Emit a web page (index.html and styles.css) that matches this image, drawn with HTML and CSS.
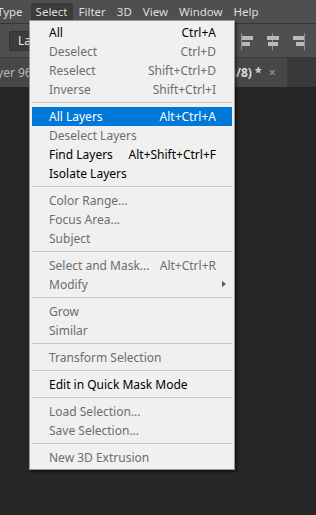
FILE: index.html
```
<!DOCTYPE html>
<html lang="en">
<head>
  <meta charset="UTF-8" />
  <meta name="viewport" content="width=device-width, initial-scale=1.0"/>
  <title>Select menu</title>
  <link rel="stylesheet" href="styles.css">
</head>
<body>

  <nav class="menubar">
    <span class="menubar-item first">Type</span>
    <span class="menubar-item open">Select</span>
    <span class="menubar-item">Filter</span>
    <span class="menubar-item">3D</span>
    <span class="menubar-item">View</span>
    <span class="menubar-item">Window</span>
    <span class="menubar-item">Help</span>
  </nav>

  <div class="options-bar">
    <div class="layer-select">Layer</div>
    <div class="align-icons">
      <svg width="14" height="17" viewBox="0 0 14 17">
        <rect x="0" y="0" width="1" height="17" fill="#8f8f8f"/>
        <rect x="1" y="3" width="11" height="4" fill="#b9b9b9"/>
        <rect x="1" y="9" width="8" height="4" fill="#b9b9b9"/>
      </svg>
      <svg width="14" height="17" viewBox="0 0 14 17">
        <rect x="6" y="0" width="1" height="17" fill="#8f8f8f"/>
        <rect x="1" y="3" width="12" height="4" fill="#b9b9b9"/>
        <rect x="2" y="9" width="10" height="4" fill="#b9b9b9"/>
      </svg>
      <svg width="14" height="17" viewBox="0 0 14 17">
        <rect x="13" y="0" width="1" height="17" fill="#8f8f8f"/>
        <rect x="2" y="3" width="11" height="4" fill="#b9b9b9"/>
        <rect x="5" y="9" width="8" height="4" fill="#b9b9b9"/>
      </svg>
    </div>
  </div>

  <div class="tabbar">
    <div class="tab first">Layer 96</div>
    <div class="tab active"><span class="tab-title">RGB/8) *</span><span class="tab-close">&times;</span></div>
  </div>

  <div class="workspace"></div>

  <ul class="dropdown">
    <li class="item"><span>All</span><span>Ctrl+A</span></li>
    <li class="item disabled"><span>Deselect</span><span>Ctrl+D</span></li>
    <li class="item disabled"><span>Reselect</span><span>Shift+Ctrl+D</span></li>
    <li class="item disabled"><span>Inverse</span><span>Shift+Ctrl+I</span></li>
    <li class="sep"></li>
    <li class="item hover"><span>All Layers</span><span>Alt+Ctrl+A</span></li>
    <li class="item disabled"><span>Deselect Layers</span></li>
    <li class="item"><span>Find Layers</span><span>Alt+Shift+Ctrl+F</span></li>
    <li class="item"><span>Isolate Layers</span></li>
    <li class="sep"></li>
    <li class="item disabled"><span>Color Range...</span></li>
    <li class="item disabled"><span>Focus Area...</span></li>
    <li class="item disabled"><span>Subject</span></li>
    <li class="sep"></li>
    <li class="item disabled"><span>Select and Mask...</span><span>Alt+Ctrl+R</span></li>
    <li class="item disabled submenu"><span>Modify</span></li>
    <li class="sep"></li>
    <li class="item disabled"><span>Grow</span></li>
    <li class="item disabled"><span>Similar</span></li>
    <li class="sep"></li>
    <li class="item disabled"><span>Transform Selection</span></li>
    <li class="sep"></li>
    <li class="item"><span>Edit in Quick Mask Mode</span></li>
    <li class="sep"></li>
    <li class="item disabled"><span>Load Selection...</span></li>
    <li class="item disabled"><span>Save Selection...</span></li>
    <li class="sep"></li>
    <li class="item disabled"><span>New 3D Extrusion</span></li>
  </ul>

</body>
</html>
```

FILE: styles.css
```
body {
  font-family: 'Noto Sans', sans-serif;
  font-size: 12px;
  background-color: #262626;
  margin: 0;
  padding: 0;
  overflow: hidden;
  height: 515px;
}

.menubar {
  height: 24px;
  background-color: #4f4f4f;
  border-bottom: 1px solid #383838;
  display: flex;
  align-items: center;
  color: #dedede;
  font-size: 11.5px;
  box-sizing: border-box;
  white-space: nowrap;
}

.menubar-item {
  padding: 1px 5px 2px;
  margin-right: 1px;
}

.menubar-item.first {
  margin-left: -8px;
  margin-right: 3px;
}

.menubar-item.open {
  background-color: #3b3b3b;
  border-radius: 2px 2px 0 0;
}

.options-bar {
  height: 33px;
  background-color: #4f4f4f;
  border-bottom: 1px solid #383838;
  display: flex;
  align-items: center;
  justify-content: space-between;
  padding: 0 11px 0 9px;
}

.layer-select {
  height: 18px;
  width: 60px;
  background-color: #3b3b3b;
  border: 1px solid #333;
  border-radius: 2px;
  color: #e8e8e8;
  padding-left: 8px;
  line-height: 18px;
}

.align-icons {
  display: flex;
  gap: 11px;
  margin-top: 2px;
}

.tabbar {
  height: 29px;
  background-color: #3a3a3a;
  display: flex;
}

.tab {
  background-color: #474747;
  color: #b8b8b8;
  line-height: 29px;
  white-space: nowrap;
  overflow: hidden;
}

.tab.first {
  width: 130px;
  text-indent: -16px;
}

.tab.active {
  width: 157px;
  display: flex;
  justify-content: flex-end;
  color: #dadada;
  font-weight: bold;
}

.tab-close {
  color: #9a9a9a;
  font-weight: normal;
  margin: 0 11px 0 7px;
  font-size: 13px;
}

.dropdown {
  position: absolute;
  left: 29px;
  top: 20px;
  width: 200px;
  margin: 0;
  padding: 2px;
  list-style: none;
  background-color: #f0f0f0;
  border: 1px solid #979797;
  box-shadow: 2px 2px 2px rgba(0, 0, 0, 0.45);
  color: #000;
}

.item {
  height: 19px;
  padding: 0 16px 0 17px;
  display: flex;
  justify-content: space-between;
  align-items: center;
  white-space: nowrap;
}

.item.disabled {
  color: #6d6d6d;
}

.item.hover {
  background-color: #0078d7;
  color: #fff;
}

.item.submenu {
  position: relative;
}

.item.submenu::after {
  content: '';
  position: absolute;
  right: 6px;
  top: 6px;
  border-left: 4px solid #555;
  border-top: 3.5px solid transparent;
  border-bottom: 3.5px solid transparent;
}

.sep {
  height: 1px;
  background-color: #c6c6c6;
  margin: 3px 0 4px;
}
```
